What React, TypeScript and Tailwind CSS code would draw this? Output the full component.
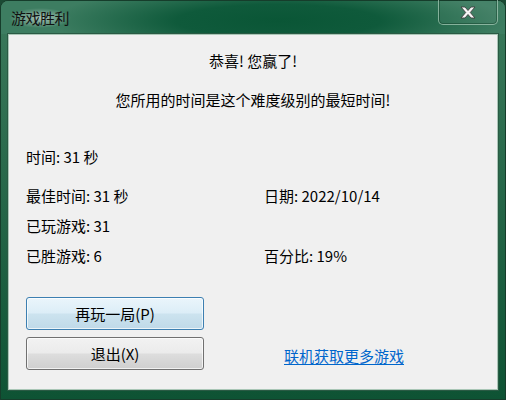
import React from "react";

const cjk = { fontFamily: '"Noto Sans CJK SC", "Noto Sans", sans-serif' };

function CloseGlyph() {
  return (
    <svg width="16" height="13" viewBox="0 0 16 13">
      <path
        d="M1 1 L5 1 L8 4.5 L11 1 L15 1 L10.3 6.5 L15 12 L11 12 L8 8.5 L5 12 L1 12 L5.7 6.5 Z"
        fill="#f6f6f6"
        stroke="#3e3e3e"
        strokeWidth="0.9"
        strokeLinejoin="round"
      />
    </svg>
  );
}

function Stat({ label, value }: { label: string; value: string }) {
  return (
    <div className="h-5 leading-5">
      {label}: {value}
    </div>
  );
}

export default function App() {
  return (
    <div className="h-[400px] w-[506px] bg-[#1b4a34]" style={cjk}>
      <div className="flex h-full flex-col rounded-t-[8px] border border-[#163d2b] bg-[linear-gradient(180deg,#3b7a5c_0%,#2a6a4c_40%,#0e5334_100%)]">
        {/* title bar */}
        <div className="flex h-[33px] shrink-0 items-start rounded-t-[7px] bg-[radial-gradient(ellipse_45%_110%_at_55%_60%,#0a5636_0%,#0f5a3b_45%,#3d7d61_100%)]">
          <div className="ml-[8px] mt-[7px] rounded-full bg-[radial-gradient(closest-side,rgba(255,255,255,0.55),rgba(255,255,255,0))] px-[2px] text-[15px] leading-5 tracking-[-0.5px] text-[#111]">
            游戏胜利
          </div>
          <div className="ml-auto mr-[7px] flex h-[25px] w-[60px] -translate-y-[1px] items-center justify-center rounded-b-[5px] border border-t-0 border-[#a8ccb8]/70 bg-[#ffffff]/5 shadow-[inset_0_0_0_1px_rgba(0,40,20,0.35)]">
            <CloseGlyph />
          </div>
        </div>

        {/* client area */}
        <div className="mx-[7px] mb-[9px] flex-1 border border-[#a9c6b6] shadow-[0_0_0_1px_#2a5a44]">
          <div className="h-full bg-[#f0f0f0] pt-[16px] text-[15px] text-black">
            <div className="h-5 text-center leading-5">恭喜! 您赢了!</div>
            <div className="mt-[19px] h-5 text-center leading-5">
              您所用的时间是这个难度级别的最短时间!
            </div>

            <div className="mt-[37px] pl-[17px]">
              <Stat label="时间" value="31 秒" />
            </div>

            <div className="mt-[19px] grid grid-cols-[238px_1fr] gap-y-[10px] pl-[17px]">
              <Stat label="最佳时间" value="31 秒" />
              <Stat label="日期" value="2022/10/14" />
              <Stat label="已玩游戏" value="31" />
              <div />
              <Stat label="已胜游戏" value="6" />
              <Stat label="百分比" value="19%" />
            </div>

            <div className="mt-[31px] flex items-end pl-[17px]">
              <div className="flex flex-col gap-[7px]">
                <button className="h-[33px] w-[178px] rounded-[3px] border border-[#3c7fb1] bg-[linear-gradient(180deg,#eaf5fb_0%,#dcedf7_48%,#cce3ef_52%,#bfd9e8_100%)] text-[15px] leading-5 text-black shadow-[inset_0_0_0_1px_rgba(255,255,255,0.7)]">
                  再玩一局(P)
                </button>
                <button className="h-[33px] w-[178px] rounded-[3px] border border-[#707070] bg-[linear-gradient(180deg,#f2f2f2_0%,#ebebeb_48%,#dddddd_52%,#cfcfcf_100%)] text-[15px] leading-5 text-black shadow-[inset_0_0_0_1px_rgba(255,255,255,0.7)]">
                  退出(X)
                </button>
              </div>
              <a className="mb-[4px] ml-[80px] leading-5 text-[#0066cc] underline underline-offset-2">
                联机获取更多游戏
              </a>
            </div>
          </div>
        </div>
      </div>
    </div>
  );
}
